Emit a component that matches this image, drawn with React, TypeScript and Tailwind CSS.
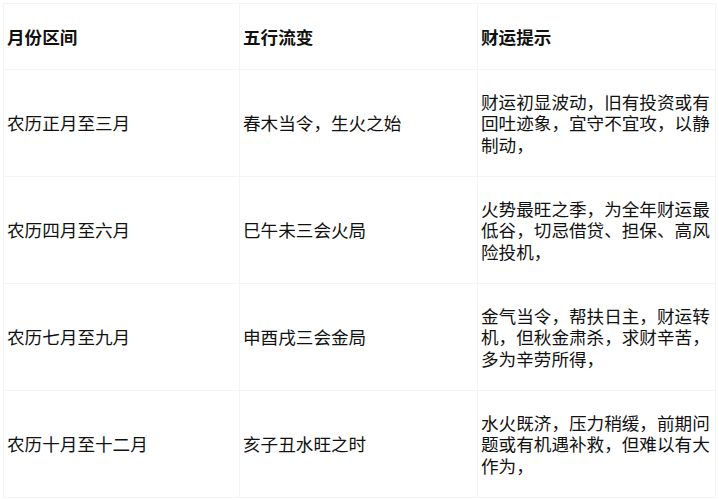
const rows = [
  {
    month: "农历正月至三月",
    wuxing: "春木当令，生火之始",
    tip: "财运初显波动，旧有投资或有回吐迹象，宜守不宜攻，以静制动，",
  },
  {
    month: "农历四月至六月",
    wuxing: "巳午未三会火局",
    tip: "火势最旺之季，为全年财运最低谷，切忌借贷、担保、高风险投机，",
  },
  {
    month: "农历七月至九月",
    wuxing: "申酉戌三会金局",
    tip: "金气当令，帮扶日主，财运转机，但秋金肃杀，求财辛苦，多为辛劳所得，",
  },
  {
    month: "农历十月至十二月",
    wuxing: "亥子丑水旺之时",
    tip: "水火既济，压力稍缓，前期问题或有机遇补救，但难以有大作为，",
  },
];

export default function App() {
  return (
    <div className="h-[500px] w-[719px] bg-white p-[3px] font-['Microsoft_YaHei','Noto_Sans_CJK_SC',sans-serif] text-[17.6px] leading-[21.5px] text-[#111]">
      <table className="table-fixed border-collapse">
        <colgroup>
          <col className="w-[236px]" />
          <col className="w-[238px]" />
          <col className="w-[238px]" />
        </colgroup>
        <thead>
          <tr className="h-[66px]">
            {["月份区间", "五行流变", "财运提示"].map((h) => (
              <th
                key={h}
                className="border border-[#f4f4f4] px-[3px] text-left align-middle font-bold"
              >
                {h}
              </th>
            ))}
          </tr>
        </thead>
        <tbody>
          {rows.map((r) => (
            <tr key={r.month} className="h-[107px]">
              <td className="border border-[#f4f4f4] px-[3px] align-middle">{r.month}</td>
              <td className="border border-[#f4f4f4] px-[3px] align-middle">{r.wuxing}</td>
              <td className="border border-[#f4f4f4] pl-[3px] pr-[1px] align-middle">{r.tip}</td>
            </tr>
          ))}
        </tbody>
      </table>
    </div>
  );
}
